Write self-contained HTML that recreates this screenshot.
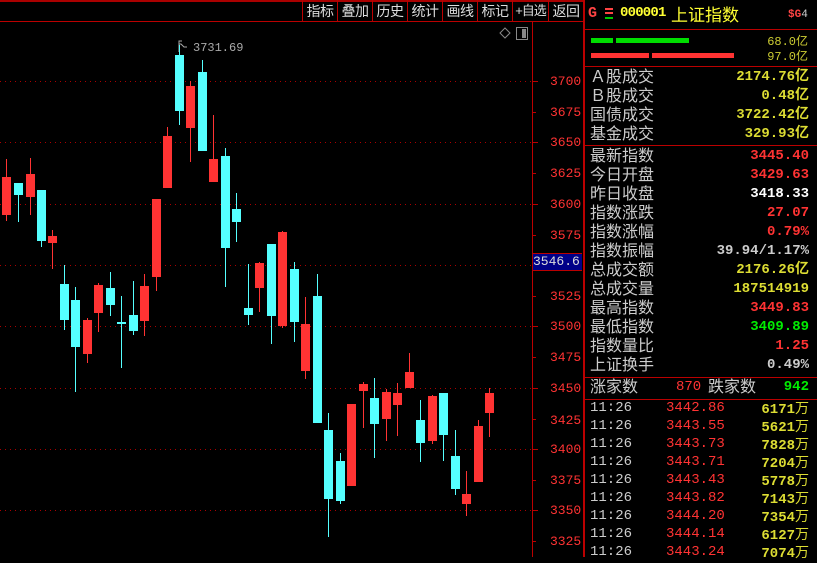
<!DOCTYPE html>
<html><head><meta charset="utf-8"><style>
*{margin:0;padding:0}
body{width:817px;height:557px;background:#000;overflow:hidden;position:relative;font-family:"Liberation Sans","Noto Sans CJK SC",sans-serif}
.a{position:absolute;white-space:nowrap}
.tb{position:absolute;top:0;height:21px;line-height:22px;color:#ddd;font-size:14px;text-align:center;border-left:1px solid #b00;white-space:nowrap;overflow:hidden;letter-spacing:-0.5px}
.r{position:absolute;left:590px;width:219px;height:19px;font-size:16px;line-height:19px;color:#ccc}
.r span{position:absolute;right:0;font-family:"Liberation Mono","Noto Sans CJK SC",monospace;font-weight:bold;font-size:14px}
.t{position:absolute;left:590px;width:219px;height:18px;font-size:14px;line-height:18px;font-family:"Liberation Mono","Noto Sans CJK SC",monospace}
.lab{position:absolute;left:550px;color:#f33;font-family:"Liberation Mono",monospace;font-size:13px;line-height:13px}
</style></head><body>
<div class="a" style="left:0;top:0;width:583px;height:2px;background:#a00"></div>
<div class="a" style="left:0;top:21px;width:583px;height:1px;background:#b00"></div>
<div class="tb" style="left:302px;width:34px">指标</div>
<div class="tb" style="left:337px;width:34px">叠加</div>
<div class="tb" style="left:372px;width:34px">历史</div>
<div class="tb" style="left:407px;width:34px">统计</div>
<div class="tb" style="left:442px;width:34px">画线</div>
<div class="tb" style="left:477px;width:34px">标记</div>
<div class="tb" style="left:512px;width:35px;font-size:13px;letter-spacing:-1px">+自选</div>
<div class="tb" style="left:548px;width:34px">返回</div>
<div class="a" style="left:532px;top:22px;width:1px;height:535px;background:#b00"></div>
<div class="a" style="left:583px;top:0;width:2px;height:557px;background:#b00"></div>
<svg class="a" style="left:0;top:0" width="583" height="557">
<g stroke="#a00" stroke-dasharray="1,4" stroke-width="1">
<line x1="0" x2="532" y1="81.5" y2="81.5"/><line x1="0" x2="532" y1="142.5" y2="142.5"/><line x1="0" x2="532" y1="204.5" y2="204.5"/><line x1="0" x2="532" y1="265.5" y2="265.5"/><line x1="0" x2="532" y1="326.5" y2="326.5"/><line x1="0" x2="532" y1="388.5" y2="388.5"/><line x1="0" x2="532" y1="449.5" y2="449.5"/><line x1="0" x2="532" y1="510.5" y2="510.5"/>
</g>
<g stroke="#b00" stroke-width="1">
<line x1="532" x2="538" y1="81.5" y2="81.5"/><line x1="532" x2="536" y1="112.5" y2="112.5"/><line x1="532" x2="538" y1="142.5" y2="142.5"/><line x1="532" x2="536" y1="173.5" y2="173.5"/><line x1="532" x2="538" y1="204.5" y2="204.5"/><line x1="532" x2="536" y1="235.5" y2="235.5"/><line x1="532" x2="536" y1="296.5" y2="296.5"/><line x1="532" x2="538" y1="326.5" y2="326.5"/><line x1="532" x2="536" y1="357.5" y2="357.5"/><line x1="532" x2="538" y1="388.5" y2="388.5"/><line x1="532" x2="536" y1="419.5" y2="419.5"/><line x1="532" x2="538" y1="449.5" y2="449.5"/><line x1="532" x2="536" y1="480.5" y2="480.5"/><line x1="532" x2="538" y1="510.5" y2="510.5"/><line x1="532" x2="536" y1="541.5" y2="541.5"/>
</g>
<path d="M505 28 l5 5 l-5 5 l-5 -5z" fill="none" stroke="#888"/>
<rect x="516.5" y="27.5" width="11" height="12" fill="none" stroke="#888"/><rect x="522" y="29" width="4" height="9" fill="#888"/>
<path d="M179 52 V41 h3 M179 44 h2 l3 3 h3" fill="none" stroke="#aaa"/>
<text x="193" y="51" fill="#aaa" font-family="Liberation Mono" font-size="12">3731.69</text>
<g id="c"></g>
</svg>
<div class="a" style="left:533px;top:253px;width:49px;height:16px;background:#008;border-top:1px solid #b00;border-bottom:1px solid #b00;color:#ddd;font-family:'Liberation Mono',monospace;font-size:13px;line-height:16px">3546.6</div>
<div class="lab" style="top:75px">3700</div><div class="lab" style="top:106px">3675</div><div class="lab" style="top:136px">3650</div><div class="lab" style="top:167px">3625</div><div class="lab" style="top:198px">3600</div><div class="lab" style="top:229px">3575</div><div class="lab" style="top:290px">3525</div><div class="lab" style="top:320px">3500</div><div class="lab" style="top:351px">3475</div><div class="lab" style="top:382px">3450</div><div class="lab" style="top:414px">3425</div><div class="lab" style="top:443px">3400</div><div class="lab" style="top:474px">3375</div><div class="lab" style="top:504px">3350</div><div class="lab" style="top:535px">3325</div>
<div class="a" style="left:588px;top:5px;font-size:15px;font-weight:bold;color:#f44;font-family:'Liberation Mono',monospace">G</div>
<div class="a" style="left:605px;top:8px;width:8px;height:2px;background:#f44"></div><div class="a" style="left:605px;top:12px;width:8px;height:2px;background:#f44"></div><div class="a" style="left:605px;top:17px;width:8px;height:2px;background:#0c0"></div>
<div class="a" style="left:620px;top:5px;font-size:14px;letter-spacing:-0.8px;color:#ff3;font-weight:bold;font-family:'Liberation Mono',monospace">000001</div>
<div class="a" style="left:671px;top:2px;font-size:17px;color:#ff3;font-family:'Noto Sans CJK SC',sans-serif;line-height:24px">上证指数</div>
<div class="a" style="left:788px;top:9px;font-size:11px;color:#f44;font-weight:bold;font-family:'Liberation Mono',monospace">$G<span style="color:#ccc;font-weight:normal">4</span></div>
<div class="a" style="left:585px;top:29px;width:232px;height:1px;background:#b00"></div>
<div class="a" style="left:591px;top:38px;width:22px;height:5px;background:#0d0"></div><div class="a" style="left:616px;top:38px;width:73px;height:5px;background:#0d0"></div>
<div class="a" style="left:591px;top:53px;width:58px;height:5px;background:#f33"></div><div class="a" style="left:652px;top:53px;width:82px;height:5px;background:#f33"></div>
<div class="a" style="right:9px;top:32px;font-size:12px;color:#cc3;font-family:'Liberation Mono','Noto Sans CJK SC',monospace">68.0亿</div>
<div class="a" style="right:9px;top:47px;font-size:12px;color:#cc3;font-family:'Liberation Mono','Noto Sans CJK SC',monospace">97.0亿</div>
<div class="a" style="left:585px;top:66px;width:232px;height:1px;background:#b00"></div>
<div class="r" style="top:68px">Ａ股成交<span style="color:#dd3">2174.76亿</span></div>
<div class="r" style="top:87px">Ｂ股成交<span style="color:#dd3">0.48亿</span></div>
<div class="r" style="top:106px">国债成交<span style="color:#dd3">3722.42亿</span></div>
<div class="r" style="top:125px">基金成交<span style="color:#dd3">329.93亿</span></div>
<div class="a" style="left:585px;top:145px;width:232px;height:1px;background:#b00"></div>
<div class="r" style="top:147px">最新指数<span style="color:#f33">3445.40</span></div>
<div class="r" style="top:166px">今日开盘<span style="color:#f33">3429.63</span></div>
<div class="r" style="top:185px">昨日收盘<span style="color:#fff">3418.33</span></div>
<div class="r" style="top:204px">指数涨跌<span style="color:#f33">27.07</span></div>
<div class="r" style="top:223px">指数涨幅<span style="color:#f33">0.79%</span></div>
<div class="r" style="top:242px">指数振幅<span style="color:#ccc">39.94/1.17%</span></div>
<div class="r" style="top:261px">总成交额<span style="color:#dd3">2176.26亿</span></div>
<div class="r" style="top:280px">总成交量<span style="color:#dd3">187514919</span></div>
<div class="r" style="top:299px">最高指数<span style="color:#f33">3449.83</span></div>
<div class="r" style="top:318px">最低指数<span style="color:#0e0">3409.89</span></div>
<div class="r" style="top:337px">指数量比<span style="color:#f33">1.25</span></div>
<div class="r" style="top:356px">上证换手<span style="color:#ccc">0.49%</span></div>
<div class="a" style="left:585px;top:377px;width:232px;height:1px;background:#b00"></div>
<div class="r" style="top:378px">涨家数<b style="position:absolute;left:86px;color:#f33;font-family:'Liberation Mono',monospace;font-size:14px;font-weight:normal">870</b><b style="position:absolute;left:118px;font-weight:normal">跌家数</b><span style="color:#0e0">942</span></div>
<div class="a" style="left:585px;top:399px;width:232px;height:1px;background:#b00"></div>
<div id="ticks"></div>
<script>
var d=[[6,159,177,215,221,1],[18,183,183,195,222,0],[30,158,174,197,215,1],[41,190,190,241,247,0],[52,230,236,243,269,1],[64,265,284,320,330,0],[75,287,300,347,392,0],[87,318,320,354,363,1],[98,283,285,313,332,1],[110,272,288,305,316,0],[121,296,322,324,368,0],[133,281,315,331,335,0],[144,274,286,321,336,1],[156,199,199,277,291,1],[167,127,136,188,188,1],[179,45,55,111,125,0],[190,81,86,128,162,1],[202,60,72,151,151,0],[213,115,159,182,182,1],[225,148,156,248,287,0],[236,193,209,222,242,0],[248,264,308,315,325,0],[259,262,263,288,312,1],[271,244,244,316,344,0],[282,231,232,326,328,1],[294,262,269,322,342,0],[305,297,324,371,379,1],[317,274,296,423,423,0],[328,413,430,499,537,0],[340,453,461,501,504,0],[351,404,404,486,486,1],[363,382,384,391,428,1],[374,378,398,424,458,0],[386,389,392,419,441,1],[397,383,393,405,436,1],[409,353,372,388,388,1],[420,400,420,443,462,0],[432,395,396,441,444,1],[443,393,393,435,461,0],[455,430,456,489,495,0],[466,471,494,504,516,1],[478,420,426,482,482,1],[489,388,393,413,437,1]];
var s='';d.forEach(function(c){var col=c[5]?'#f33':'#5ff';s+='<line x1="'+(c[0]+.5)+'" x2="'+(c[0]+.5)+'" y1="'+c[1]+'" y2="'+c[4]+'" stroke="'+col+'"/><rect x="'+(c[0]-4)+'" y="'+c[2]+'" width="9" height="'+Math.max(2,c[3]-c[2])+'" fill="'+col+'"/>';});
document.getElementById('c').innerHTML=s;
var t=[['3442.86','6171'],['3443.55','5621'],['3443.73','7828'],['3443.71','7204'],['3443.43','5778'],['3443.82','7143'],['3444.20','7354'],['3444.14','6127'],['3443.24','7074']];
var h='';t.forEach(function(r,i){h+='<div class="t" style="top:'+(399+i*18)+'px;color:#ccc">11:26<b style="position:absolute;left:76px;color:#f33;font-weight:normal">'+r[0]+'</b><b style="position:absolute;right:0;color:#dd3">'+r[1]+'<span style="font-weight:normal;font-family:\'Noto Sans CJK SC\'">万</span></b></div>';});
document.getElementById('ticks').innerHTML=h;
</script>
</body></html>
